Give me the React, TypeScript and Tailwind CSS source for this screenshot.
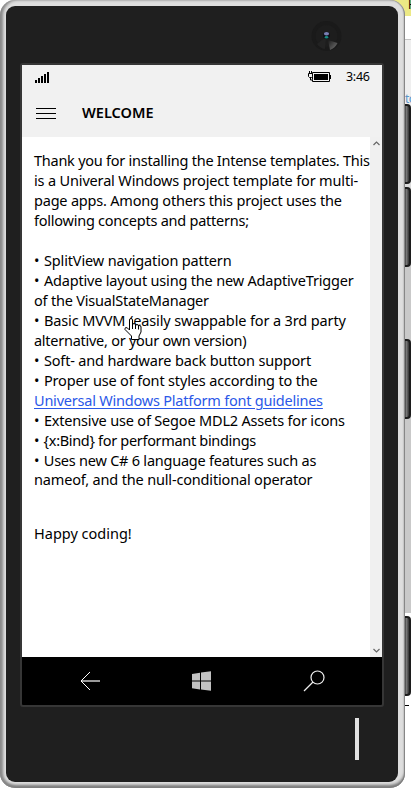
import React from "react";

type Line = { text: string; cls: string; link?: boolean; bullet?: boolean };

const lines: Line[] = [
  { text: "Thank you for installing the Intense templates. This", cls: "tracking-[-0.25px]" },
  { text: "is a Univeral Windows project template for multi-", cls: "tracking-[-0.16px]" },
  { text: "page apps. Among others this project uses the", cls: "tracking-[-0.2px]" },
  { text: "following concepts and patterns;", cls: "tracking-[-0.24px]" },
  { text: "", cls: "" },
  { bullet: true, text: "SplitView navigation pattern", cls: "tracking-[-0.14px]" },
  { bullet: true, text: "Adaptive layout using the new AdaptiveTrigger", cls: "tracking-[-0.18px]" },
  { text: "of the VisualStateManager", cls: "tracking-[-0.21px]" },
  { bullet: true, text: "Basic MVVM (easily swappable for a 3rd party", cls: "tracking-[-0.13px]" },
  { text: "alternative, or your own version)", cls: "tracking-[-0.26px]" },
  { bullet: true, text: "Soft- and hardware back button support", cls: "tracking-[-0.16px]" },
  { bullet: true, text: "Proper use of font styles according to the", cls: "tracking-[-0.16px]" },
  { text: "Universal Windows Platform font guidelines", cls: "tracking-[-0.22px]", link: true },
  { bullet: true, text: "Extensive use of Segoe MDL2 Assets for icons", cls: "tracking-[-0.18px]" },
  { bullet: true, text: "{x:Bind} for performant bindings", cls: "tracking-[-0.32px]" },
  { bullet: true, text: "Uses new C# 6 language features such as", cls: "tracking-[-0.23px]" },
  { text: "nameof, and the null-conditional operator", cls: "-mt-px tracking-[-0.17px]" },
];

function Camera() {
  return (
    <svg className="absolute left-[311px] top-[20px]" width="32" height="32" viewBox="0 0 32 32">
      <defs>
        <linearGradient id="lens" x1="0" y1="0" x2="1" y2="1">
          <stop offset="0" stopColor="#1b1b1b" />
          <stop offset="1" stopColor="#777" />
        </linearGradient>
      </defs>
      <circle cx="15.5" cy="16" r="15" fill="#1a1a1a" />
      <circle cx="15.5" cy="16" r="11" fill="#1d1d1d" />
      <path d="M17 20 L26.5 23 A13 13 0 0 1 19 30 Z" fill="url(#lens)" />
      <path d="M15 17 L6 24 A12 12 0 0 0 14 29 Z" fill="#232323" />
      <circle cx="15.5" cy="15.5" r="3.5" fill="#0f1118" />
      <ellipse cx="15.5" cy="13.8" rx="2.6" ry="1.8" fill="#7a80b4" />
      <ellipse cx="15.5" cy="17.3" rx="1.8" ry="1.2" fill="#178c83" />
    </svg>
  );
}

function SideKey({ cls }: { cls: string }) {
  return (
    <div
      className={`absolute -left-2 w-[14px] h-[80px] rounded-[4px] border-2 border-[#1c1c1c] bg-linear-to-r from-[#444] from-60% via-[#777] via-75% to-[#333] ${cls}`}
    />
  );
}

export default function App() {
  return (
    <div className="relative h-[789px] w-[411px] overflow-hidden bg-white font-['Noto_Sans',sans-serif] text-black">
      <div className="absolute right-0 top-0 h-[16px] w-[20px] bg-[#ece985]" />
      <div className="absolute left-[405px] top-0 h-full w-[6px] overflow-hidden">
        <div className="h-[16px] overflow-hidden bg-[#ece985] pl-[3px] text-[12px] leading-[9px]">H</div>
        <div className="h-[23px] bg-white" />
        <div className="h-[574px] border-t border-[#c4c4c4] bg-linear-to-b from-[#efefef] from-20% to-[#c9c9c9] to-30%" />
        <div className="absolute left-0 top-[92px] text-[12px] leading-[14px] tracking-[-0.5px] text-[#5a94c8]">to</div>
        <SideKey cls="top-[104px]" />
        <SideKey cls="top-[187px]" />
        <SideKey cls="top-[339px]" />
        <SideKey cls="top-[616px]" />
        <div className="absolute left-0 top-[705px] h-px w-[4px] bg-black" />
      </div>

      <div className="relative h-[788px] w-[405px] rounded-[15px] bg-[#dedede] pl-[6px] pt-[6px] shadow-[inset_3px_0_3px_#888,inset_0_-3px_3px_#777,inset_-1px_0_1px_#888]">
        <div className="h-[776px] w-[392px] rounded-[9px] bg-[#1f1f1f] px-[14px] pt-[57px]">
          <div className="h-[644px] w-[364px] rounded-[3px] border-2 border-[#363636] bg-black">
            <header className="h-[72px] bg-[#f1f1f1]">
              <div className="flex h-6 items-center pl-[13px] pr-[12px]">
                <svg width="15" height="12" viewBox="0 0 15 12" shapeRendering="crispEdges">
                  <path d="M0 9h2v3H0zM3 7h2v5H3zM6 5h2v7H6zM9 3h2v9H9zM12 1h2v11h-2z" />
                </svg>
                <svg className="ml-auto" width="23" height="12" viewBox="0 0 23 12">
                  <path d="M4.500 1.500H21.500v9H4.500z" fill="none" stroke="#000" />
                  <path d="M6 3h14v6H6zM22 4h1v4h-1z" />
                  <path d="M.5 2.500h4v3L3.500 6.500h-2l-1-1zM1.500 0v2.500M3.500 0v2.500M2.500 6.500v2.500H5" fill="#f1f1f1" stroke="#000" />
                </svg>
                <span className="ml-[15px] w-[24px] whitespace-nowrap text-[12.5px] leading-4 tracking-[-0.3px]">3:46</span>
              </div>
              <div className="flex h-12 items-center pl-[14px]">
                <svg width="20" height="11" viewBox="0 0 20 11" shapeRendering="crispEdges">
                  <path d="M0 0h20v1H0zM0 5h20v1H0zM0 10h20v1H0z" />
                </svg>
                <span className="mb-0.5 ml-[26px] text-[14.5px] font-semibold leading-5">WELCOME</span>
              </div>
            </header>
            <main className="flex h-[520px] bg-white">
              <div className="w-[348px] pl-[12px] pt-[13px] text-[14.5px]">
                {lines.map((l, i) => (
                  <p key={i} className={`h-5 whitespace-nowrap leading-5 ${l.cls}`}>
                    {l.bullet && <span className="mr-px">• </span>}
                    <span className={l.link ? "text-[#2b58e8] underline underline-offset-2" : ""}>{l.text}</span>
                  </p>
                ))}
                <p className="mt-[34px] leading-5">Happy coding!</p>
              </div>
              <div className="flex w-[12px] flex-col items-center justify-between bg-[#f0f0f0] py-[4px]">
                <svg width="7" height="5" viewBox="0 0 7 5" fill="none" stroke="#666" strokeWidth="1.2">
                  <path d="M.5 4 3.500 1l3 3" />
                </svg>
                <svg width="7" height="5" viewBox="0 0 7 5" fill="none" stroke="#666" strokeWidth="1.2">
                  <path d="M.5 1l3 3 3-3" />
                </svg>
              </div>
            </main>
            <nav className="flex h-12 items-center pl-[58px]">
              <svg width="20" height="20" viewBox="0 0 20 20" fill="none">
                <path d="M1 10h19" stroke="#999" strokeWidth="2" />
                <path d="M10 1l-9 9 9 9" stroke="#fff" />
              </svg>
              <svg className="ml-[92px]" width="20" height="20" viewBox="0 0 20 20" fill="#c2c2c2">
                <path d="M0 3l8-1.200V9.500H0zM9 1.600L19 .3v9.200H9zM0 10.500h8v7.900l-8-1.200zM9 10.500h10v9.200L9 18.500z" />
              </svg>
              <svg className="ml-[91px]" width="22" height="22" viewBox="0 0 22 22" fill="none" stroke="#eee" strokeWidth="1.200">
                <circle cx="14.500" cy="7.500" r="6.500" />
                <path d="M10 12L1 21" />
              </svg>
            </nav>
          </div>
        </div>
      </div>

      <Camera />
      <div className="absolute left-[355px] top-[718px] h-[42px] w-[4px] bg-[#e2e2e2]" />
      <svg className="absolute left-[124px] top-[318px]" width="18" height="23" viewBox="0 0 18 23">
        <path
          d="M5.500 12V2q0-1.500 1.500-1.500T8.500 2v5q0-1.500 1.500-1.500T11.500 7v1q0-1.500 1.500-1.500T14.500 8v1q0-1.500 1-1.500 1.500 0 1.500 1.500v5l-2 4v3.500H7.500V18L1 11.500q-.5-1.500 1-2 1.500 0 3.500 2.500zM8.500 7v4M11.500 8v3M14.500 9v2.500"
          fill="#fff"
          stroke="#000"
        />
      </svg>
    </div>
  );
}
